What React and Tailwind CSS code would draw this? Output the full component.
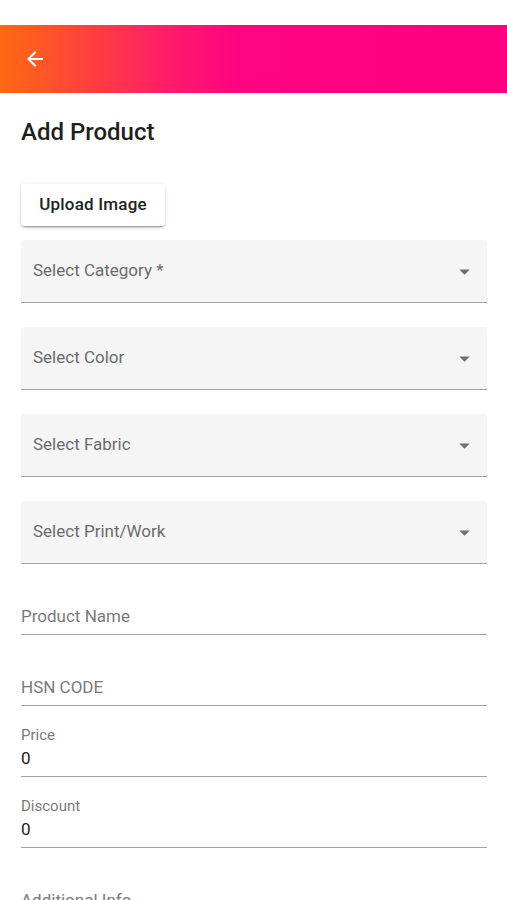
import React from "react";

const selects = ["Select Category *", "Select Color", "Select Fabric", "Select Print/Work"];

function SelectField({ label }) {
  return (
    <div className="mb-[24px] flex h-[63px] items-center justify-between rounded-t-[4px] border-b border-[#a3a3a3] bg-[#f5f5f5] pl-3 pr-[10px]">
      <span className="text-[17px] text-[#6b6b6b]">{label}</span>
      <svg width="25" height="25" viewBox="0 0 24 24" fill="#6f6f6f">
        <path d="M7 10l5 5 5-5z" />
      </svg>
    </div>
  );
}

function TextField({ label, value }) {
  return (
    <div className="mt-[20px] border-b border-[#a3a3a3] pb-[6px]">
      <div className="h-[20px] pt-[2px] text-[15px] leading-[14px] text-[#7a7a7a]">
        {value !== undefined ? label : ""}
      </div>
      <div className="h-[24px] text-[17px] leading-[24px]">
        {value !== undefined ? (
          <span className="text-[#222]">{value}</span>
        ) : (
          <span className="text-[#7a7a7a]">{label}</span>
        )}
      </div>
    </div>
  );
}

export default function App() {
  return (
    <div className="min-h-[900px] bg-white" style={{ fontFamily: "Roboto, 'Liberation Sans', sans-serif" }}>
      <div className="h-[25px]" />
      {/* Header bar */}
      <div className="flex h-[68px] items-center bg-[linear-gradient(to_right,#ff6a10_0%,#ff3a45_20%,#ff1670_36%,#ff0580_46%,#ff0080_100%)] pl-[23px]">
        <svg width="24" height="24" viewBox="0 0 24 24" fill="white">
          <path d="M20 11H7.83l5.59-5.59L12 4l-8 8 8 8 1.41-1.41L7.83 13H20v-2z" />
        </svg>
      </div>

      <div className="flex flex-col pl-[21px] pr-[20px]">
        <h1 className="mt-[25px] text-[24px] font-medium leading-[28px] text-[#1f1f1f]">Add Product</h1>

        <button className="mt-[38px] mb-[14px] h-[42px] w-[144px] self-start rounded-[4px] bg-white text-[17px] font-medium tracking-[0.2px] text-[#222] shadow-[0_3px_1px_-2px_rgba(0,0,0,0.2),0_2px_2px_0_rgba(0,0,0,0.14),0_1px_5px_0_rgba(0,0,0,0.12)]">
          Upload Image
        </button>

        {selects.map((s) => (
          <SelectField key={s} label={s} />
        ))}

        <div className="-mt-[24px] flex flex-col">
          <TextField label="Product Name" />
          <TextField label="HSN CODE" />
          <TextField label="Price" value="0" />
          <TextField label="Discount" value="0" />
          <TextField label="Additional Info" />
        </div>
      </div>
    </div>
  );
}
